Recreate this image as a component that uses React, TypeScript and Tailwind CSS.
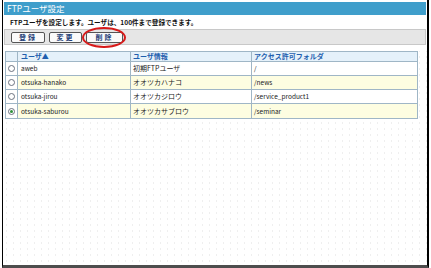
import React from "react";

const rows = [
  { user: "aweb", info: "初期FTPユーザ", folder: "/", checked: false },
  { user: "otsuka-hanako", info: "オオツカハナコ", folder: "/news", checked: false },
  { user: "otsuka-jirou", info: "オオツカジロウ", folder: "/service_product1", checked: false },
  { user: "otsuka-saburou", info: "オオツカサブロウ", folder: "/seminar", checked: true },
];

function Radio({ checked }: { checked: boolean }) {
  return (
    <span className="flex h-[7px] w-[7px] items-center justify-center rounded-full border border-[#6b7280] bg-white">
      {checked && <span className="h-[3px] w-[3px] rounded-full bg-[#2f8f3a]" />}
    </span>
  );
}

function Btn({ label }: { label: string }) {
  return (
    <div className="flex h-[11px] items-center justify-center rounded-[2px] border border-[#555] bg-[#fafafa] text-[7px] font-bold leading-none tracking-[2px] text-[#1f3f78]">
      {label}
    </div>
  );
}

export default function App() {
  return (
    <div
      className="relative h-[268px] w-[431px] bg-white"
      style={{ fontFamily: '"Noto Sans CJK JP", "Noto Sans", sans-serif' }}
    >
      <div className="ml-[2px] flex h-[268px] w-[427px] flex-col border-b-[3px] border-l border-r-2 border-b-[#4d4d4d] border-l-black border-r-black bg-[radial-gradient(circle,#efefef_0.7px,transparent_0.9px)] bg-[length:7px_6px]">
        <div className="flex flex-col bg-white pb-[6px]">
          <div className="ml-[1px] mr-[1px] mt-[2px] flex h-[13px] items-center bg-[#3f9ecb] pl-[3px] text-[8.5px] leading-none text-white">
            FTPユーザ設定
          </div>
          <div className="flex h-[14px] items-center pl-[7px] text-[6.6px] font-bold leading-none text-[#111]">
            FTPユーザを設定します。ユーザは、100件まで登録できます。
          </div>
          <div className="relative ml-[1px] mr-[1px] flex h-[16px] items-center gap-[4px] border border-[#c8c8c8] bg-[#e6e6e6] pl-[6px]">
            <div className="w-[34px]"><Btn label="登録" /></div>
            <div className="w-[33px]"><Btn label="変更" /></div>
            <div className="w-[37px]"><Btn label="削除" /></div>
            <div className="absolute left-[77px] top-[-3px] h-[21px] w-[44px] rounded-[50%] border-2 border-[#d71a1a]" />
          </div>
        </div>
        <div className="ml-[2px] w-[413px] border border-[#9fb6c6] text-[7px] leading-none text-[#222]">
          <div className="flex h-[10px] border-b border-[#9fb6c6] bg-[#e5f1fa] font-bold text-[#1f5fae]">
            <div className="w-[12px] border-r border-[#9fb6c6]" />
            <div className="flex w-[113px] items-center border-r border-[#9fb6c6] pl-[3px]">ユーザ▲</div>
            <div className="flex w-[121px] items-center border-r border-[#9fb6c6] pl-[2px]">ユーザ情報</div>
            <div className="flex flex-1 items-center pl-[2px]">アクセス許可フォルダ</div>
          </div>
          {rows.map((r, i) => (
            <div
              key={r.user}
              className={`flex h-[14px] ${i < rows.length - 1 ? "border-b border-[#9fb6c6]" : ""} ${i % 2 === 1 ? "bg-[#fdfde1]" : "bg-white"}`}
            >
              <div className="flex w-[12px] items-center justify-center border-r border-[#9fb6c6] bg-white">
                <Radio checked={r.checked} />
              </div>
              <div className="flex w-[113px] items-center border-r border-[#9fb6c6] pl-[3px] text-[6.5px]">{r.user}</div>
              <div className="flex w-[121px] items-center border-r border-[#9fb6c6] pl-[2px]">{r.info}</div>
              <div className="flex flex-1 items-center pl-[2px] text-[6.5px]">{r.folder}</div>
            </div>
          ))}
        </div>
      </div>
    </div>
  );
}
